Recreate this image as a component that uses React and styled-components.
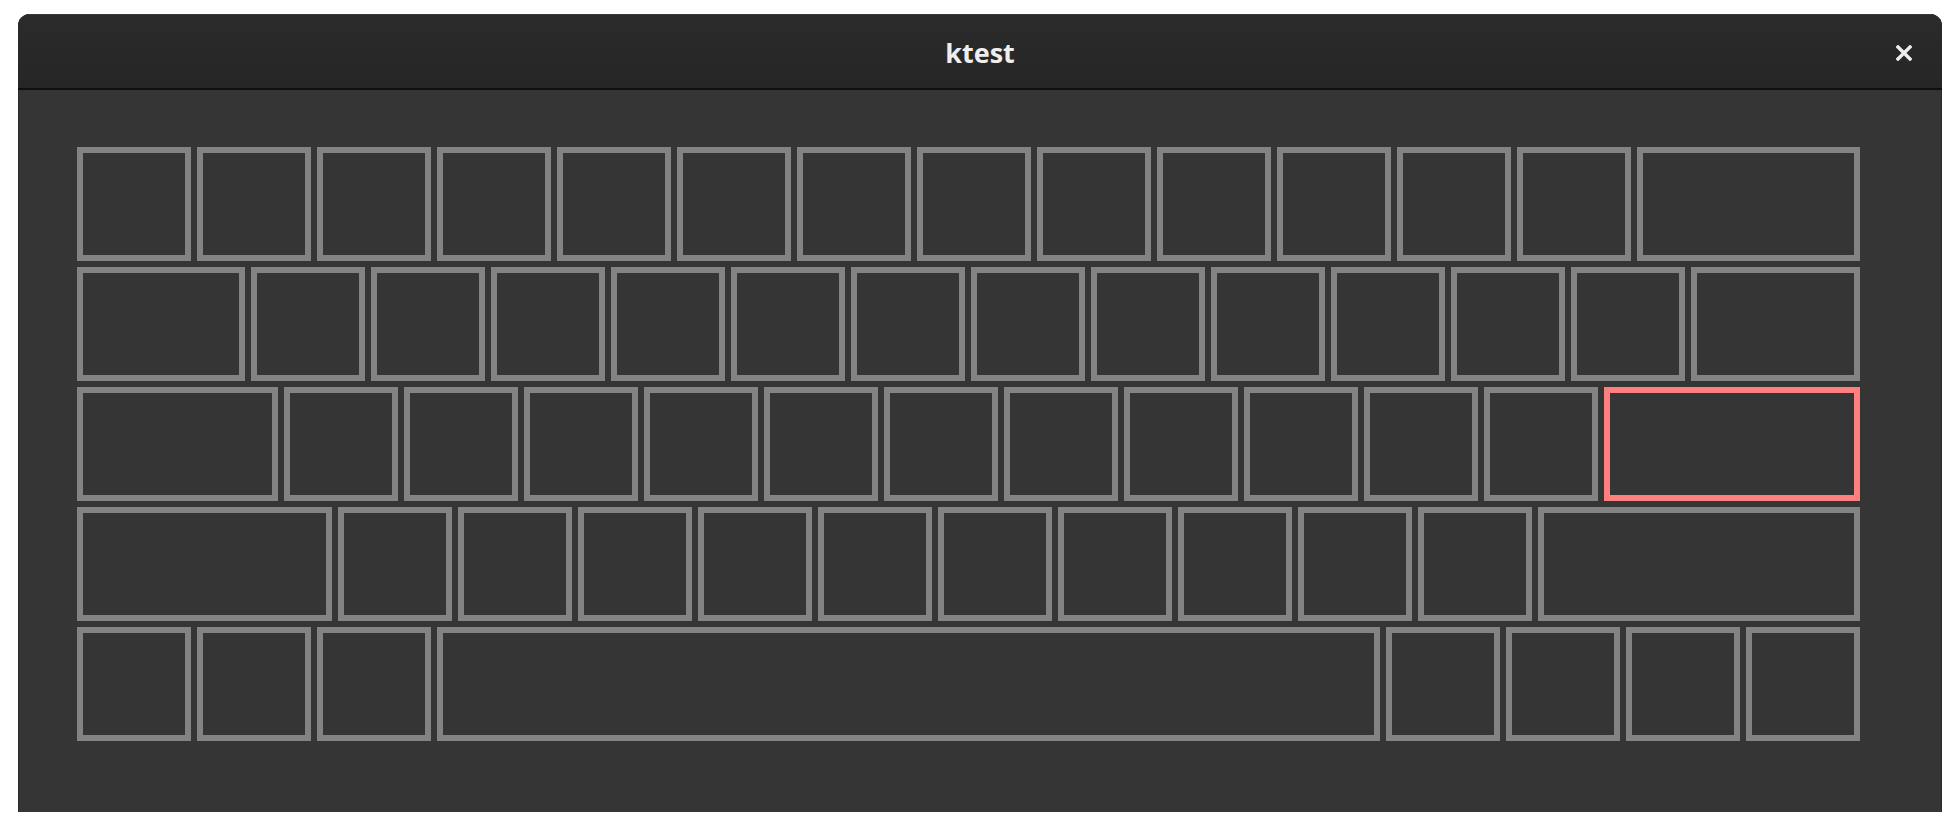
import React from 'react';
import styled, { createGlobalStyle } from 'styled-components';

const GlobalStyle = createGlobalStyle`
  html, body {
    margin: 0;
    padding: 0;
    background: #ffffff;
  }
  body {
    font-family: "Open Sans", "Noto Sans", sans-serif;
  }
`

const Window = styled.div`
  margin: 14px 18px 0;
  width: 1924px;
  height: 798px;
  display: flex;
  flex-direction: column;
  border-radius: 12px 12px 0 0;
  overflow: hidden;
  background: #353535;
  box-shadow: inset 1px 0 0 #2c2c2c, inset -1px 0 0 #2c2c2c;
`

const HeaderBar = styled.div`
  height: 74px;
  flex: none;
  display: grid;
  grid-template-columns: 1fr auto 1fr;
  align-items: center;
  background: linear-gradient(#2b2b2b, #262626);
  box-shadow: inset 0 1px 0 #3a3a3a;
  border-bottom: 2px solid #0f0f0f;
`

const Title = styled.div`
  grid-column: 2;
  color: #eeeeec;
  font-size: 27px;
  font-weight: 700;
  line-height: 1;
  padding-top: 2px;
`

const CloseButton = styled.div`
  grid-column: 3;
  justify-self: end;
  width: 16px;
  height: 16px;
  margin-right: 30px;
  margin-top: 4px;
  display: flex;
`

const Content = styled.div`
  flex: 1;
  padding: 57px 0 0 59px;
`

const Keyboard = styled.div`
  width: 1783px;
  display: flex;
  flex-direction: column;
  gap: 6px;
`

const Row = styled.div`
  display: flex;
  gap: 6px;
`

const Key = styled.div`
  box-sizing: border-box;
  height: 114px;
  width: ${p => (p.$w ? `${p.$w}px` : 'auto')};
  flex: ${p => (p.$w ? 'none' : '1')};
  border: 6px solid ${p => (p.$active ? '#ff7f7f' : '#838383')};
  background: #353535;
`

const U = 114;
const rep = (n) => Array(n).fill(U);

// last key of each row fills what is left
const rows = [
  [...rep(13), 0],
  [168, ...rep(12), 0],
  [201, ...rep(11), 0],
  [255, ...rep(10), 0],
  [...rep(3), 943, ...rep(3), 0],
];

export default function App() {
  return (
    <>
      <GlobalStyle />
      <Window>
        <HeaderBar>
          <Title>ktest</Title>
          <CloseButton>
            <svg width="16" height="16" viewBox="0 0 16 16">
              <path d="M2 2 L14 14 M14 2 L2 14" stroke="#eeeeec" strokeWidth="3.4" strokeLinecap="square" />
            </svg>
          </CloseButton>
        </HeaderBar>
        <Content>
          <Keyboard>
            {rows.map((row, r) => (
              <Row key={r}>
                {row.map((w, i) => (
                  <Key key={i} $w={w} $active={r === 2 && i === row.length - 1} />
                ))}
              </Row>
            ))}
          </Keyboard>
        </Content>
      </Window>
    </>
  );
}
